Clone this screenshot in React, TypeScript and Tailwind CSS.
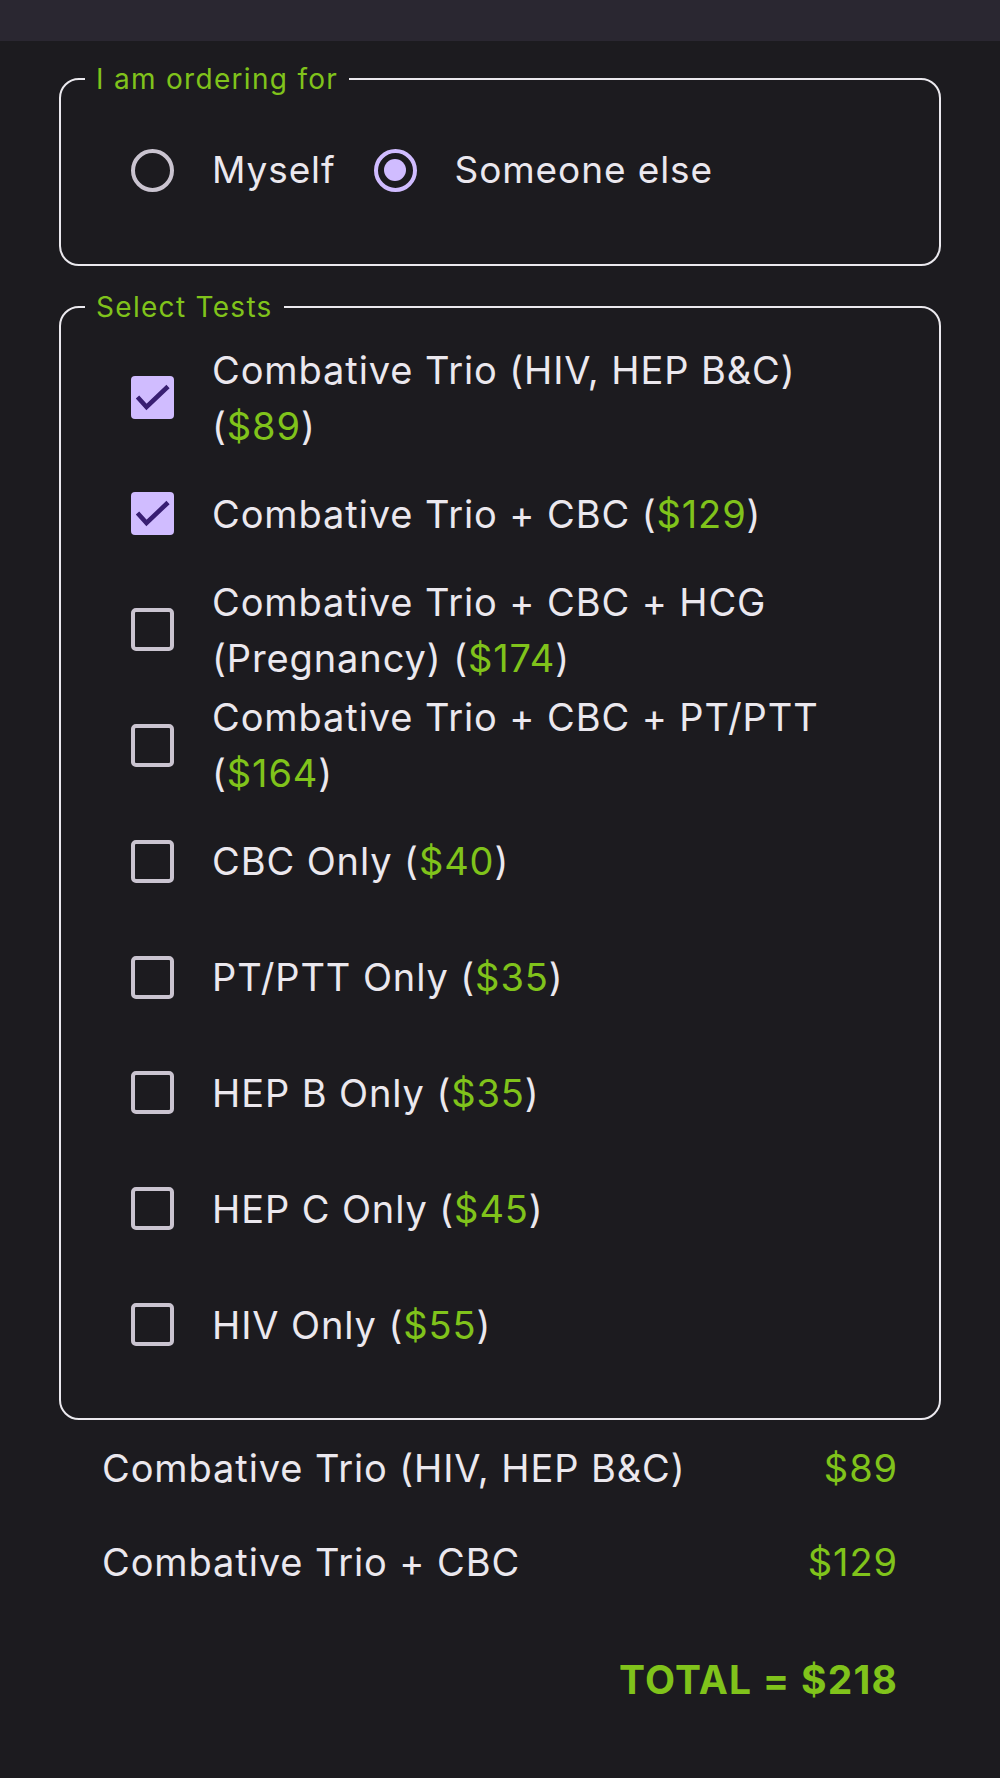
import React, { useState } from "react";

type Test = { name: string; price: number };

const tests: Test[] = [
  { name: "Combative Trio (HIV, HEP B&C)", price: 89 },
  { name: "Combative Trio + CBC", price: 129 },
  { name: "Combative Trio + CBC + HCG (Pregnancy)", price: 174 },
  { name: "Combative Trio + CBC + PT/PTT", price: 164 },
  { name: "CBC Only", price: 40 },
  { name: "PT/PTT Only", price: 35 },
  { name: "HEP B Only", price: 35 },
  { name: "HEP C Only", price: 45 },
  { name: "HIV Only", price: 55 },
];

function Radio({ checked }: { checked: boolean }) {
  return (
    <div
      className={`w-[43px] h-[43px] rounded-full border-[4.3px] flex items-center justify-center flex-shrink-0 ${
        checked ? "border-[#d0bcff]" : "border-[#cac4d0]"
      }`}
    >
      {checked && <div className="w-[22px] h-[22px] rounded-full bg-[#d0bcff]" />}
    </div>
  );
}

function Checkbox({ checked }: { checked: boolean }) {
  if (checked) {
    return (
      <div className="w-[43px] h-[43px] rounded-[4px] bg-[#d0bcff] flex-shrink-0">
        <svg viewBox="0 0 43 43" className="w-full h-full">
          <polyline points="6.5,21 15.5,31 37,10.5" fill="none" stroke="#381e72" strokeWidth="4.6" />
        </svg>
      </div>
    );
  }
  return <div className="w-[43px] h-[43px] rounded-[5px] border-[4.3px] border-[#cac4d0] flex-shrink-0" />;
}

export default function App() {
  const [forWhom, setForWhom] = useState<"me" | "other">("other");
  const [selected, setSelected] = useState<number[]>([0, 1]);

  const toggle = (i: number) =>
    setSelected((s) => (s.includes(i) ? s.filter((x) => x !== i) : [...s, i].sort((a, b) => a - b)));

  const total = selected.reduce((sum, i) => sum + tests[i].price, 0);

  return (
    <div className="min-h-[1778px] bg-[#1c1b1f] font-['Inter',sans-serif] text-[#ebe8ee]">
      {/* top bar */}
      <div className="h-[41px] bg-[#2a2731]" />

      {/* ordering for */}
      <fieldset className="mx-[59px] mt-[21px] border-2 border-[#ebe9ee] rounded-[20px] px-0 pb-[72px]">
        <legend className="ml-[24px] px-[11px] text-[28px] leading-[34px] tracking-[1.3px] text-[#80c31b]">
          I am ordering for
        </legend>
        <div className="flex items-center gap-[38px] pl-[70px] mt-[52px] text-[37px] leading-[44px] tracking-[0.9px]">
          <button className="flex items-center gap-[38px]" onClick={() => setForWhom("me")}>
            <Radio checked={forWhom === "me"} />
            <span>Myself</span>
          </button>
          <button className="flex items-center gap-[38px]" onClick={() => setForWhom("other")}>
            <Radio checked={forWhom === "other"} />
            <span>Someone else</span>
          </button>
        </div>
      </fieldset>

      {/* tests */}
      <fieldset className="mx-[59px] mt-[24px] border-2 border-[#ebe9ee] rounded-[20px] px-0 pt-[16px] pb-[35px]">
        <legend className="ml-[24px] px-[11px] text-[28px] leading-[34px] tracking-[1.3px] text-[#80c31b]">
          Select Tests
        </legend>
        <div className="flex flex-col">
          {tests.map((t, i) => (
            <button
              key={t.name}
              onClick={() => toggle(i)}
              className="h-[115.85px] flex items-center gap-[38px] pl-[70px] pr-[69px] text-left"
            >
              <Checkbox checked={selected.includes(i)} />
              <span className="text-[38px] leading-[56px] tracking-[0.9px]">
                {t.name} (<span className="text-[#80c31b]">${t.price}</span>)
              </span>
            </button>
          ))}
        </div>
      </fieldset>

      {/* summary */}
      <div className="px-[102px] pt-[20px] flex flex-col gap-[38px] text-[38px] leading-[56px] tracking-[0.9px]">
        {selected.map((i) => (
          <div key={i} className="flex justify-between">
            <span>{tests[i].name}</span>
            <span className="text-[#80c31b]">${tests[i].price}</span>
          </div>
        ))}
      </div>
      <div className="px-[102px] mt-[62px] flex justify-end">
        <span className="text-[39px] leading-[56px] font-bold tracking-[1.2px] text-[#80c31b]">
          TOTAL = ${total}
        </span>
      </div>
    </div>
  );
}
